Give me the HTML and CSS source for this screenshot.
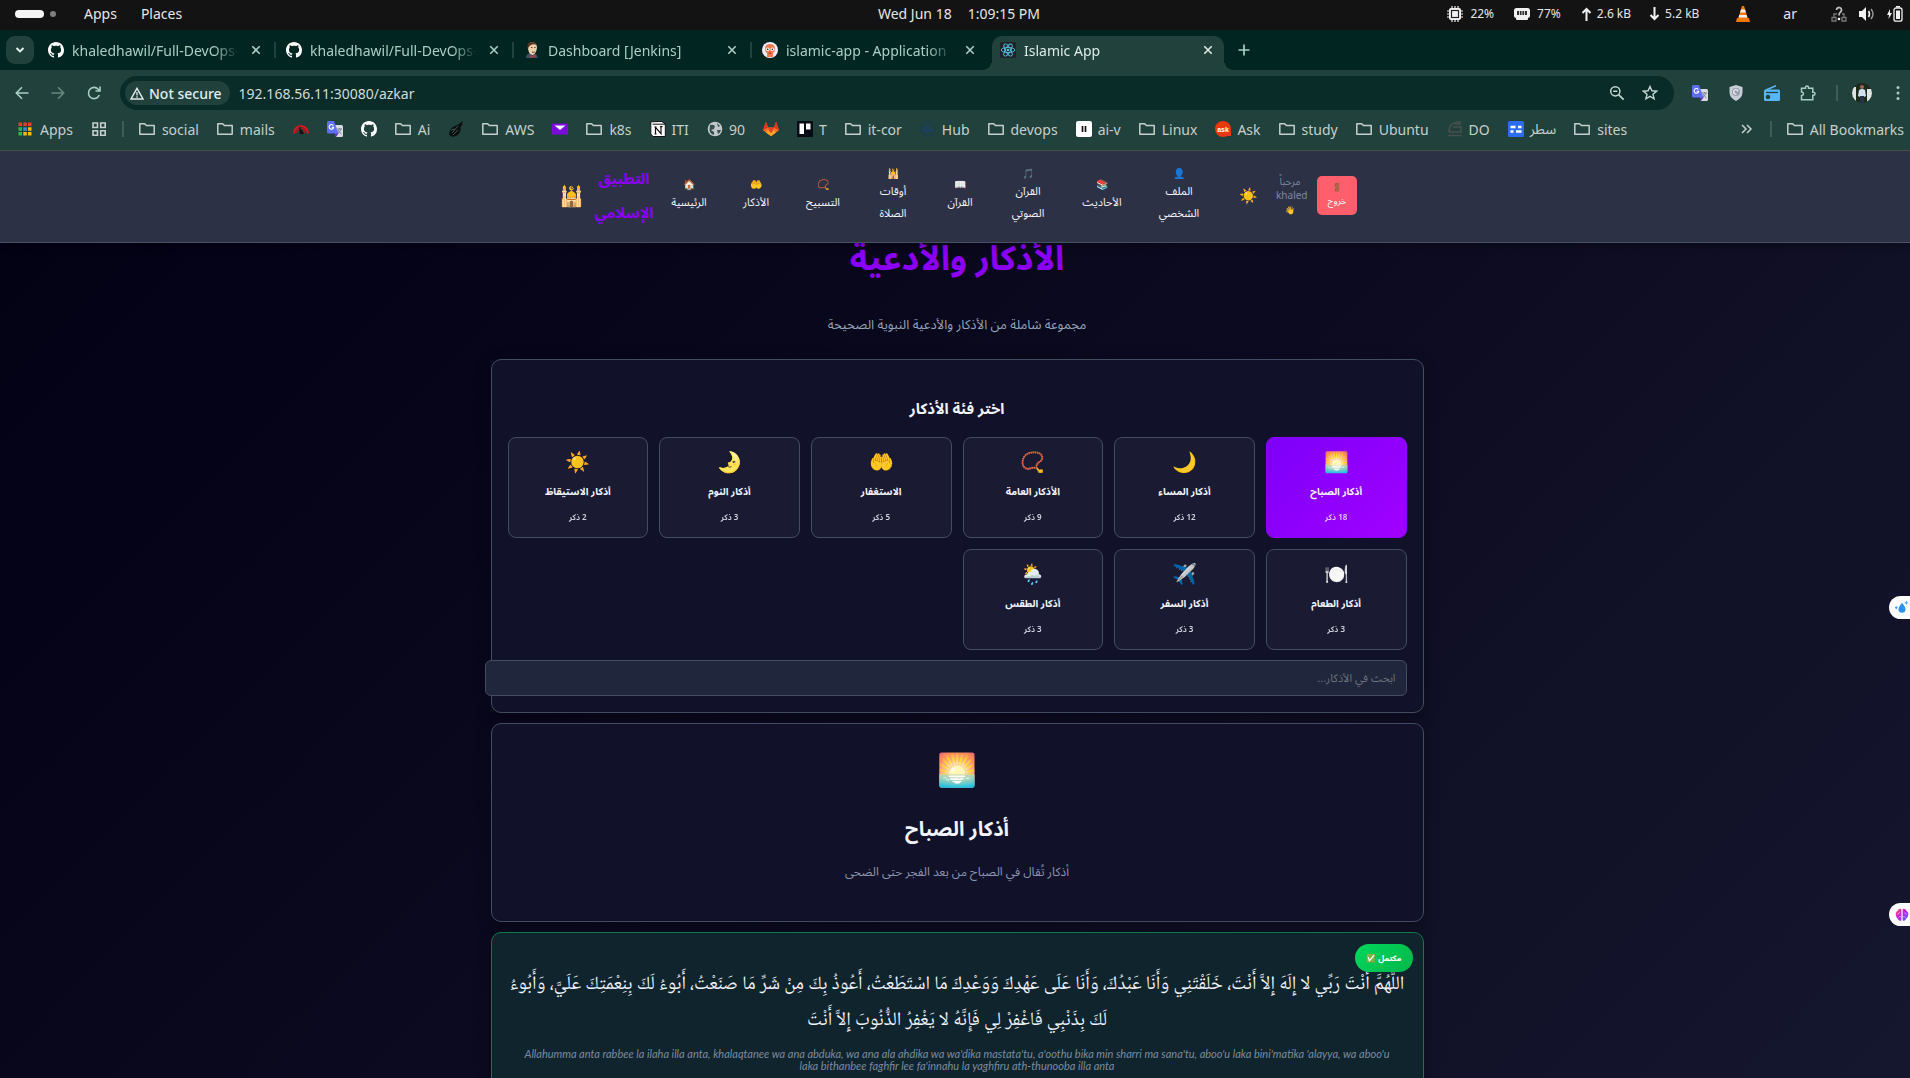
FILE: index.html
```html
<!DOCTYPE html>
<html lang="ar">
<head>
<meta charset="utf-8">
<meta name="viewport" content="width=device-width, initial-scale=1">
<title>Islamic App</title>
<link rel="stylesheet" href="styles.css">
</head>
<body>
<svg class="sprite" aria-hidden="true">
  <symbol id="github" viewBox="0 0 16 16"><path fill="currentColor" d="M8 0C3.58 0 0 3.58 0 8c0 3.54 2.29 6.53 5.47 7.59.4.07.55-.17.55-.38 0-.19-.01-.82-.01-1.49-2.01.37-2.53-.49-2.69-.94-.09-.23-.48-.94-.82-1.13-.28-.15-.68-.52-.01-.53.63-.01 1.08.58 1.23.82.72 1.21 1.87.87 2.33.66.07-.52.28-.87.51-1.07-1.78-.2-3.64-.89-3.64-3.95 0-.87.31-1.59.82-2.15-.08-.2-.36-1.02.08-2.12 0 0 .67-.21 2.2.82.64-.18 1.32-.27 2-.27s1.36.09 2 .27c1.53-1.04 2.2-.82 2.2-.82.44 1.1.16 1.92.08 2.12.51.56.82 1.27.82 2.15 0 3.07-1.87 3.75-3.65 3.95.29.25.54.73.54 1.48 0 1.07-.01 1.93-.01 2.2 0 .21.15.46.55.38A8.01 8.01 0 0 0 16 8c0-4.42-3.58-8-8-8z"/></symbol>
  <symbol id="folder" viewBox="0 0 16 16"><path d="M.8 3v10.2h14.4V4.6H7.4L5.6 2.7H.8z" fill="none" stroke="currentColor" stroke-width="1.5" stroke-linejoin="round"/></symbol>
  <symbol id="close" viewBox="0 0 10 10"><path d="M1.3 1.3l7.4 7.4M8.7 1.3L1.3 8.7" stroke="currentColor" stroke-width="1.6" fill="none"/></symbol>
  <symbol id="translate" viewBox="0 0 16 16"><path d="M6 4h8.500q1.500 0 1.500 1.500V14.500q0 1.500-1.500 1.500H9z" fill="#d8dce0"/><path d="M10 8h5M12.500 7v1M14 8q-1 3-4 5M11 9q1 2 3.500 4" stroke="#77808c" fill="none"/><path d="M1.500 0h5.500l4.500 12.500H1.500q-1.500 0-1.500-1.500V1.500q0-1.500 1.500-1.500z" fill="#5f6ff5"/><path d="M7.500 12.500h4L9 16z" fill="#5a2bc0"/><path d="M6.300 4.500A2.300 2.300 0 1 0 6.700 6.300H4.700" fill="none" stroke="#fff" stroke-width="1.100"/></symbol>
</svg>

<header class="panel">
  <div class="panel-left">
    <span class="workspaces"><i class="pill"></i><i class="dot"></i></span>
    <span>Apps</span><span>Places</span>
  </div>
  <div class="clock"><span>Wed Jun 18</span><span>1:09:15 PM</span></div>
  <div class="panel-right">
    <span class="stat"><svg class="i16" viewBox="0 0 16 16"><path d="M5 0v16M8 0v16M11 0v16M0 5h16M0 8h16M0 11h16" stroke="#eee" stroke-width="1.200"/><rect x="2" y="2" width="12" height="12" rx="2" fill="#f2f2f2"/><rect x="4.500" y="4.500" width="7" height="7" fill="#f2f2f2" stroke="#222" stroke-width="1.200"/></svg>22%</span>
    <span class="stat"><svg class="i16" viewBox="0 0 16 16"><rect x="0" y="2" width="16" height="10" rx="2.500" fill="#f2f2f2"/><rect x="2" y="10" width="12" height="4" rx="1" fill="#f2f2f2"/><path d="M3 5h10v4H3z" fill="#333"/><path d="M5.500 5v4M8 5v4M10.500 5v4" stroke="#ccc"/></svg>77%</span>
    <span class="stat net"><svg class="arrow" viewBox="0 0 10 14"><path d="M5 14V2M1 6l4-4 4 4" stroke="#f2f2f2" stroke-width="2" fill="none"/></svg>2.6 kB</span>
    <span class="stat net"><svg class="arrow" viewBox="0 0 10 14"><path d="M5 0v12M1 8l4 4 4-4" stroke="#f2f2f2" stroke-width="2" fill="none"/></svg>5.2 kB</span>
    <svg class="i16 vlc" viewBox="0 0 16 16"><path d="M2 12l-1 4h14l-1-4z" fill="#f57900"/><path d="M7 0h2l4 13q-5 2-10 0z" fill="#f57900"/><path d="M6 3.500h4l.9 3H5.100zM4.300 9h7.400l.7 2.500H3.600z" fill="#eee"/></svg>
    <span class="lang">ar</span>
    <span class="tray">
    <svg class="i16" viewBox="0 0 16 16"><path d="M1 11.500h4v3.500H1zM11 11.500h4v3.500h-4zM3 11V8h3M13 11V8h-2" stroke="#777" fill="none" stroke-width="1.300"/><path d="M5.500 4a2.500 2.500 0 1 1 4 2Q8 7 8 9.500" stroke="#bbb" stroke-width="1.800" fill="none"/><circle cx="8" cy="13" r="1.300" fill="#fff"/></svg>
    <svg class="i16" viewBox="0 0 16 16"><path d="M0 5h3l4-4v14l-4-4H0z" fill="#f2f2f2"/><path d="M9.500 5q2 3 0 6" stroke="#f2f2f2" stroke-width="1.600" fill="none"/><path d="M12 3q4 5 0 10" stroke="#999" stroke-width="1.400" fill="none"/></svg>
    <svg class="i16" viewBox="0 0 16 16"><path d="M3 3L0 9h2l-.5 4L5 7H3z" fill="#f2f2f2"/><rect x="7" y="2" width="8" height="13.200" rx="2" fill="none" stroke="#f2f2f2" stroke-width="1.300"/><rect x="9" y="4.500" width="4" height="8.500" fill="#f2f2f2"/><path d="M9 .7h4" stroke="#f2f2f2" stroke-width="1.400"/></svg>
    </span>
  </div>
</header>

<nav class="tabs" aria-label="Tabs">
  <button class="tab-search" aria-label="Search tabs"><svg viewBox="0 0 10 8"><path d="M1.500 2L5 5.500 8.500 2" stroke="currentColor" stroke-width="1.900" fill="none"/></svg></button>
  <div class="tab sep"><svg class="i16 white"><use href="#github"/></svg><span class="tab-title">khaledhawil/Full-DevOps-</span><button class="x" aria-label="Close tab"><svg><use href="#close"/></svg></button></div>
  <div class="tab sep"><svg class="i16 white"><use href="#github"/></svg><span class="tab-title">khaledhawil/Full-DevOps-</span><button class="x" aria-label="Close tab"><svg><use href="#close"/></svg></button></div>
  <div class="tab sep"><svg class="i16" viewBox="0 0 16 16"><path d="M2 16q0-4 4-5h4q3 1 4 5z" fill="#3b5068"/><path d="M4 5q-.5-4.500 4-5 5 .5 5 6-1 6-4.500 7Q4 12 4 5z" fill="#edcfa8"/><path d="M3.500 7Q2 1 7.500 0q4 0 5.500 3Q8 1 5.500 4z" fill="#54321f"/><path d="M7 5.500h1.300M10.300 5.500h1.300M8 10q1.500.8 2.800 0" stroke="#5b3d2c" fill="none"/><path d="M6.500 13l2.500 1 2.500-1.500v3L9 14.600l-2.500 1.400z" fill="#d33833"/></svg><span class="tab-title">Dashboard [Jenkins]</span><button class="x" aria-label="Close tab"><svg><use href="#close"/></svg></button></div>
  <div class="tab"><svg class="i16" viewBox="0 0 16 16"><circle cx="8" cy="8" r="8" fill="#eef"/><path d="M3 7q0-5 5-5t5 5q0 3-2 4v4H5v-4Q3 10 3 7z" fill="#ef7b4d"/><circle cx="5.700" cy="7.300" r="1.800" fill="#fff"/><circle cx="10.300" cy="7.300" r="1.800" fill="#fff"/><circle cx="5.700" cy="7.300" r=".8" fill="#111"/><circle cx="10.300" cy="7.300" r=".8" fill="#111"/><ellipse cx="8" cy="11.300" rx="1.600" ry=".8" fill="#b8392a"/></svg><span class="tab-title">islamic-app - Application</span><button class="x" aria-label="Close tab"><svg><use href="#close"/></svg></button></div>
  <div class="tab active"><svg class="i16" viewBox="0 0 16 16"><rect width="16" height="16" rx="1.500" fill="#202329"/><g fill="none" stroke="#53c1de" stroke-width=".9"><ellipse cx="8" cy="8" rx="6.800" ry="2.600"/><ellipse cx="8" cy="8" rx="6.800" ry="2.600" transform="rotate(60 8 8)"/><ellipse cx="8" cy="8" rx="6.800" ry="2.600" transform="rotate(120 8 8)"/></g><circle cx="8" cy="8" r="1.300" fill="#53c1de"/></svg><span class="tab-title">Islamic App</span><button class="x" aria-label="Close tab"><svg><use href="#close"/></svg></button></div>
  <button class="new-tab" aria-label="New tab"><svg viewBox="0 0 12 12"><path d="M6 .5v11M.5 6h11" stroke="currentColor" stroke-width="1.700"/></svg></button>
</nav>

<div class="toolbar">
  <div class="nav-buttons">
    <button aria-label="Back"><svg class="i16" viewBox="0 0 16 16"><path d="M14.500 8H2.500M8 2.300L2.300 8 8 13.700" stroke="currentColor" stroke-width="1.600" fill="none"/></svg></button>
    <button class="dim" aria-label="Forward"><svg class="i16" viewBox="0 0 16 16"><path d="M1.500 8h12M8 2.300L13.700 8 8 13.700" stroke="currentColor" stroke-width="1.600" fill="none"/></svg></button>
    <button aria-label="Reload"><svg class="i16" viewBox="0 0 16 16"><path d="M13.300 10A5.600 5.600 0 1 1 12.200 4.200L14 6M14 1.500V6H9.500" stroke="currentColor" stroke-width="1.600" fill="none"/></svg></button>
  </div>
  <div class="omnibox">
    <button class="chip"><svg viewBox="0 0 14 13"><path d="M7 1.300L13 12H1z" stroke="currentColor" stroke-width="1.400" fill="none"/><path d="M7 5v3.400M7 9.300v1.400" stroke="currentColor" stroke-width="1.300"/></svg>Not secure</button>
    <input class="url" type="text" aria-label="Address" value="192.168.56.11:30080/azkar">
    <button aria-label="Zoom"><svg class="i16" viewBox="0 0 16 16"><circle cx="6.300" cy="6.300" r="4.600" stroke="currentColor" stroke-width="1.500" fill="none"/><path d="M9.600 9.600l5 5M4.200 6.300h4.200" stroke="currentColor" stroke-width="1.600"/></svg></button>
    <button aria-label="Bookmark"><svg class="i16" viewBox="0 0 16 16"><path d="M8 1.500l1.900 4.300 4.700.4-3.600 3.100 1.100 4.600L8 11.400l-4.100 2.500L5 9.300 1.400 6.200l4.700-.4z" stroke="currentColor" stroke-width="1.400" fill="none"/></svg></button>
  </div>
  <div class="extensions">
    <svg class="i16"><use href="#translate"/></svg>
    <svg class="i16" viewBox="0 0 16 16"><path d="M8 0l6.500 2v5q0 6-6.500 9Q1.500 13 1.500 7V2z" fill="#c9cdd6"/><circle cx="8" cy="7" r="4" fill="#9a9fae"/><path d="M10 6.500A2.200 2.200 0 1 0 8.500 9" stroke="#f4f4f8" fill="none" stroke-width="1.200"/></svg>
    <svg class="i16" viewBox="0 0 16 16"><path d="M2 5L12 .8" stroke="#58b7f7" stroke-width="1.600"/><rect y="4.500" width="16" height="11.500" rx="1.500" fill="#58b7f7"/><path d="M2 7.500h12" stroke="#21413c" stroke-width="1.300"/><circle cx="4" cy="12" r="2.300" fill="#21413c"/></svg>
    <svg class="i16" viewBox="0 0 16 16"><path d="M1.500 3.300h4V2.500a1.500 1.500 0 0 1 3 0v.8h4.300v4h.7a1.500 1.500 0 0 1 0 3h-.7v4.500H1.500v-4.200q2-.3 2-1.800t-2-1.800z" stroke="currentColor" stroke-width="1.500" fill="none"/></svg>
    <i class="divider"></i>
    <svg class="avatar" viewBox="0 0 20 20"><defs><clipPath id="round"><circle cx="10" cy="10" r="10"/></clipPath></defs><g clip-path="url(#round)"><path fill="#1e2b1c" d="M0 0h20v20H0z"/><path d="M0 4h4v16H0zM15 6h5v14h-5z" fill="#dfe5e2"/><path d="M7 7q3-2 6 0l1 6-2 1H8l-2-1z" fill="#cfe0f2"/><circle cx="10" cy="4" r="2" fill="#9a6a50"/><path d="M8 13h4v7H8z" fill="#26324a"/></g></svg>
    <svg class="dots" viewBox="0 0 4 16"><circle cx="2" cy="2.500" r="1.500"/><circle cx="2" cy="8" r="1.500"/><circle cx="2" cy="13.500" r="1.500"/></svg>
  </div>
</div>

<nav class="bookmarks" aria-label="Bookmarks">
  <a href="#"><svg class="i16" viewBox="0 0 16 16"><path d="M1.500 1.500h3.500v3.500H1.500zM6.300 1.500h3.500v3.500H6.300zM11 1.500h3.500v3.500H11z" fill="#f0392f"/><path d="M1.500 6.300h3.500v3.500H1.500zM1.500 11h3.500v3.500H1.500z" fill="#2fb457"/><path d="M6.300 6.300h3.500v3.500H6.300z" fill="#4285f4"/><path d="M11 6.300h3.500v3.500H11zM6.300 11h3.500v3.500H6.300zM11 11h3.500v3.500H11z" fill="#fbbc05"/></svg>Apps</a>
  <a href="#" aria-label="Tab groups"><svg class="i16" viewBox="0 0 16 16"><path d="M2 2h4.500v4.500H2zM9.700 2h4.500v4.500H9.700zM2 9.700h4.500v4.500H2zM9.700 9.700h4.500v4.500H9.700z" stroke="currentColor" stroke-width="1.600" fill="none"/></svg></a>
  <i class="divider"></i>
  <a href="#"><svg class="i16"><use href="#folder"/></svg>social</a>
  <a href="#"><svg class="i16"><use href="#folder"/></svg>mails</a>
  <a href="#" aria-label="Speed test"><svg class="i16" viewBox="0 0 16 16"><path d="M1 12.500A7 7.500 0 0 1 15 12.500" stroke="#e0161c" stroke-width="2" fill="none"/><path d="M3.500 12a4.500 4.500 0 0 1 6-4M12 12q0-3-2-5" stroke="#b5171c" stroke-width="1.500" fill="none"/><path d="M7 13L6 5l5 8z" fill="#111"/></svg></a>
  <a href="#" aria-label="Translate"><svg class="i16"><use href="#translate"/></svg></a>
  <a href="#" aria-label="GitHub"><svg class="i16 white"><use href="#github"/></svg></a>
  <a href="#"><svg class="i16"><use href="#folder"/></svg>Ai</a>
  <a href="#" aria-label="Notes"><svg class="i16" viewBox="0 0 16 16"><path d="M14.500 0q.5 4-2 6 1 5-3 8-4 3-7 1Q0 13 2 10q1-4 5-5 4-1 7.500-5z" fill="#0b100e"/><path d="M4 12l6-7M5 14l5-5M3 9l4-1" stroke="#4c6862" stroke-width=".8"/></svg></a>
  <a href="#"><svg class="i16"><use href="#folder"/></svg>AWS</a>
  <a href="#" aria-label="Mail"><svg class="i16" viewBox="0 0 16 16"><path d="M0 2.500h16v11H0z" fill="#7b0bd8"/><path d="M2.500 4.500h11L8 9z" fill="#fff"/></svg></a>
  <a href="#"><svg class="i16"><use href="#folder"/></svg>k8s</a>
  <a href="#" class="site"><svg class="i16" viewBox="0 0 16 16"><path d="M.8.800l11-.3 3.500 2.500v12.500H3L.8 13z" fill="#fff" stroke="#111" stroke-width="1"/><path d="M2.500 3.200h12.500" stroke="#111"/><path d="M5.500 13V6.300l5.500 6.400V5.700M4.500 6h2M10 5.700h2.500M4.500 13h2" stroke="#111" stroke-width="1.200" fill="none"/></svg>ITI</a>
  <a href="#" class="site"><svg class="i16" viewBox="0 0 16 16"><circle cx="8" cy="8" r="7.300" fill="#c3c7cb"/><path d="M3 4q3-1 5 1l-1 3-3 1 3 2v3q-4-1-4.500-5zM10 2l3 3-2 1zM10 9h4q-1 3-3 4z" fill="#36504b"/></svg>90</a>
  <a href="#" aria-label="GitLab"><svg class="i16" viewBox="0 0 16 16"><path d="M8 15.300L0 9.200 2.900.8l2.300 5.600h5.600L13.100.8 16 9.200z" fill="#fc6d26"/><path d="M8 15.300L5.200 6.400h5.600z" fill="#e24329"/><path d="M0 9.200L2.900.8l2.300 5.600zM16 9.200L13.100.8l-2.300 5.600z" fill="#e2341f"/><path d="M8 15.300L3 11.500 5 9l3 3 3-3 2 2.500z" fill="#fca326"/></svg></a>
  <a href="#" class="site"><svg class="i16" viewBox="0 0 16 16"><path fill="#070b14" d="M0 0h16v16H0z"/><path d="M2.500 2.500h4.500v10.500H2.500zM9 2.500h4.500v6H9z" fill="#fff"/></svg>T</a>
  <a href="#"><svg class="i16"><use href="#folder"/></svg>it-cor</a>
  <a href="#" class="site"><svg class="i16" viewBox="0 0 16 16"><circle cx="8" cy="8" r="7.300" fill="none" stroke="#1b3a55" stroke-width="1"/><path d="M3 8h8q1-2 2-1-1 5-6 5-4 0-4-4zM4 5.500h4v2H4zM7 3.500h2v4H7z" fill="#1d3f62"/></svg>Hub</a>
  <a href="#"><svg class="i16"><use href="#folder"/></svg>devops</a>
  <a href="#" class="site"><svg class="i16" viewBox="0 0 16 16"><rect width="16" height="16" rx="2" fill="#fff"/><path d="M6.500 5v6M9.500 5v6" stroke="#111" stroke-width="1.700"/></svg>ai-v</a>
  <a href="#"><svg class="i16"><use href="#folder"/></svg>Linux</a>
  <a href="#" class="site"><svg class="i16" viewBox="0 0 16 16"><circle cx="8" cy="8" r="8" fill="#e8380d"/><path d="M9 15h7v-6z" fill="#e8380d"/><text x="8" y="10.500" text-anchor="middle" class="ask">ask</text></svg>Ask</a>
  <a href="#"><svg class="i16"><use href="#folder"/></svg>study</a>
  <a href="#"><svg class="i16"><use href="#folder"/></svg>Ubuntu</a>
  <a href="#" class="site"><svg class="i16" viewBox="0 0 16 16"><path d="M2 11q0-10 11-10v2H8M6 6h8v5H2M1 14.500h14" fill="none" stroke="#45504d" stroke-width="1.600"/></svg>DO</a>
  <a href="#" class="site"><svg class="i16" viewBox="0 0 16 16"><rect width="16" height="16" rx="1.500" fill="#2f6df0"/><path d="M2.500 6h5M10 6h3.500M2.500 10.500h3M8 10.500h5.500" stroke="#fff" stroke-width="2.600"/></svg>سطر</a>
  <a href="#"><svg class="i16"><use href="#folder"/></svg>sites</a>
  <div class="bookmarks-end">
    <a href="#" aria-label="More bookmarks"><svg class="i16" viewBox="0 0 16 16"><path d="M3 4l4 4-4 4M8 4l4 4-4 4" stroke="currentColor" stroke-width="1.500" fill="none"/></svg></a>
    <i class="divider"></i>
    <a href="#"><svg class="i16"><use href="#folder"/></svg>All Bookmarks</a>
  </div>
</nav>

<div class="page">
  <nav class="site-nav">
    <div class="brand"><span class="brand-icon">🕌</span><span class="brand-name">التطبيق الإسلامي</span></div>
    <div class="links">
      <a href="#"><span>🏠</span>الرئيسية</a>
      <a href="#"><span>🤲</span>الأذكار</a>
      <a href="#"><span>📿</span>التسبيح</a>
      <a href="#"><span>🕌</span>أوقات<br>الصلاة</a>
      <a href="#"><span>📖</span>القرآن</a>
      <a href="#"><span>🎵</span>القرآن<br>الصوتي</a>
      <a href="#"><span>📚</span>الأحاديث</a>
      <a href="#"><span>👤</span>الملف<br>الشخصي</a>
    </div>
    <button class="theme" aria-label="Theme">☀️</button>
    <div class="greeting">مرحباً<br>khaled<br><span>👋</span></div>
    <button class="logout"><span>🚪</span>خروج</button>
  </nav>

  <main class="content" dir="rtl">
    <header class="intro">
      <h1>الأذكار والأدعية</h1>
      <p>مجموعة شاملة من الأذكار والأدعية النبوية الصحيحة</p>
    </header>

    <section class="card chooser">
      <h3>اختر فئة الأذكار</h3>
      <div class="categories">
        <button class="category selected"><span class="emoji">🌅</span><b>أذكار الصباح</b><small>18 ذكر</small></button>
        <button class="category"><span class="emoji">🌙</span><b>أذكار المساء</b><small>12 ذكر</small></button>
        <button class="category"><span class="emoji">📿</span><b>الأذكار العامة</b><small>9 ذكر</small></button>
        <button class="category"><span class="emoji">🤲</span><b>الاستغفار</b><small>5 ذكر</small></button>
        <button class="category"><span class="emoji">🌛</span><b>أذكار النوم</b><small>3 ذكر</small></button>
        <button class="category"><span class="emoji">☀️</span><b>أذكار الاستيقاظ</b><small>2 ذكر</small></button>
        <button class="category"><span class="emoji">🍽️</span><b>أذكار الطعام</b><small>3 ذكر</small></button>
        <button class="category"><span class="emoji">✈️</span><b>أذكار السفر</b><small>3 ذكر</small></button>
        <button class="category"><span class="emoji">🌦️</span><b>أذكار الطقس</b><small>3 ذكر</small></button>
      </div>
      <input class="search" type="text" placeholder="ابحث في الأذكار..." aria-label="ابحث في الأذكار">
    </section>

    <section class="card summary">
      <span class="big-emoji">🌅</span>
      <h2>أذكار الصباح</h2>
      <p>أذكار تُقال في الصباح من بعد الفجر حتى الضحى</p>
    </section>

    <article class="card zikr">
      <span class="badge">مكتمل ✅</span>
      <p class="arabic">اللَّهُمَّ أَنْتَ رَبِّي لا إِلَهَ إِلاَّ أَنْتَ، خَلَقْتَنِي وَأَنَا عَبْدُكَ، وَأَنَا عَلَى عَهْدِكَ وَوَعْدِكَ مَا اسْتَطَعْتُ، أَعُوذُ بِكَ مِنْ شَرِّ مَا صَنَعْتُ، أَبُوءُ لَكَ بِنِعْمَتِكَ عَلَيَّ، وَأَبُوءُ لَكَ بِذَنْبِي فَاغْفِرْ لِي فَإِنَّهُ لا يَغْفِرُ الذُّنُوبَ إِلاَّ أَنْتَ</p>
      <p class="latin" dir="ltr">Allahumma anta rabbee la ilaha illa anta, khalaqtanee wa ana abduka, wa ana ala ahdika wa wa'dika mastata'tu, a'oothu bika min sharri ma sana'tu, aboo'u laka bini'matika 'alayya, wa aboo'u laka bithanbee faghfir lee fa'innahu la yaghfiru ath-thunooba illa anta</p>
    </article>
  </main>

  <button class="floater water" aria-label="Assistant"><svg viewBox="0 0 16 16"><path d="M8 2q4 5 4 7.500a4 4 0 0 1-8 0Q4 7 8 2z" fill="#2b93f3"/><path d="M13 0v4M11 2h4M1.500 6v3M0 7.500h3" stroke="#45a4f5" stroke-width="1.300"/></svg></button>
  <button class="floater brain" aria-label="Brain"><svg viewBox="0 0 16 16"><defs><linearGradient id="bg" x1="0" y1="0" x2="1" y2="1"><stop stop-color="#ff5a6a"/><stop offset=".5" stop-color="#c517f0"/><stop offset="1" stop-color="#3b7cff"/></linearGradient></defs><path d="M7.300 1Q4 0 3 3 0 5 1 8q0 3 2 4 2 4 4.300 2zM8.700 1Q12 0 13 3q3 2 2 5 0 3-2 4-2 4-4.300 2z" fill="url(#bg)"/><path d="M3 7q2 0 2-2M13 7q-2 0-2-2M4 11q1-2 3-1M12 11q-1-2-3-1" stroke="#fff" stroke-width=".6" fill="none"/></svg></button>
</div>
</body>
</html>
```
FILE: styles.css
```css
* { box-sizing: border-box; }
html, body { height: 100%; }
body {
  margin: 0;
  display: flex;
  flex-direction: column;
  overflow: hidden;
  font-family: "Noto Sans", "Noto Sans Arabic", "DejaVu Sans", sans-serif;
  font-size: 14px;
  color: #c5cfcc;
  background: #21413c;
}
button { font: inherit; color: inherit; border: 0; background: none; padding: 0; }
a { color: inherit; text-decoration: none; }
svg { display: block; flex: none; }
.sprite { position: absolute; width: 0; height: 0; }
.i16 { width: 16px; height: 16px; }
.white { color: #fff; }
.divider { width: 2px; height: 16px; background: #3d5e57; flex: none; }

/* desktop panel */
.panel {
  display: grid;
  grid-template-columns: 1fr auto 1fr;
  align-items: center;
  height: 30px;
  flex: none;
  padding: 0 7px 3px 15px;
  background: #131313;
  color: #e6e6e6;
}
.panel-left { display: flex; align-items: center; gap: 24px; }
.workspaces { display: flex; align-items: center; gap: 6px; margin-right: 4px; }
.pill { width: 29px; height: 8px; border-radius: 4px; background: #f4f4f4; }
.dot { width: 6px; height: 6px; border-radius: 3px; background: #808080; }
.clock { display: flex; gap: 16px; }
.panel-right { display: flex; align-items: center; justify-content: flex-end; font-size: 12px; }
.stat { display: flex; align-items: center; gap: 7px; margin-right: 20px; }
.stat.net { gap: 5px; margin-right: 18px; }
.arrow { width: 11px; height: 14px; }
.vlc { margin-left: 18px; }
.lang { margin: 0 34px 0 32px; font-size: 14px; }
.tray { display: flex; gap: 12px; }

/* browser tabs */
.tabs {
  display: flex;
  align-items: flex-start;
  height: 40px;
  flex: none;
  padding: 6px 6px 0;
  background: #012622;
  color: #a8cfc4;
}
.tab-search { width: 28px; height: 28px; margin-right: 4px; border-radius: 9px; background: #21413c; display: grid; place-items: center; }
.tab-search svg { width: 10px; height: 8px; color: #e6f0ec; }
.tab { position: relative; display: flex; align-items: center; gap: 8px; width: 238px; height: 28px; padding: 0 15px 0 10px; }
.tab.sep::after { content: ""; position: absolute; right: 0; width: 2px; height: 16px; background: #21413c; }
.tab-title { flex: 1; overflow: hidden; white-space: nowrap; -webkit-mask-image: linear-gradient(90deg, #000 85%, transparent); mask-image: linear-gradient(90deg, #000 85%, transparent); }
.x { margin-left: 4px; }
.x svg { width: 10px; height: 10px; }
.tab.active { width: 232px; height: 34px; padding: 0 11px 6px 8px; border-radius: 10px 10px 0 0; background: #21413c; color: #dcebe6; margin-left: 2px; }
.tab.active::before, .tab.active::after { content: ""; position: absolute; bottom: 0; width: 10px; height: 10px; }
.tab.active::before { left: -10px; background: radial-gradient(circle at 0 0, transparent 10px, #21413c 10px); }
.tab.active::after { right: -10px; background: radial-gradient(circle at 100% 0, transparent 10px, #21413c 10px); }
.new-tab { width: 28px; height: 28px; margin-left: 6px; display: grid; place-items: center; }
.new-tab svg { width: 12px; height: 12px; }

/* toolbar */
.toolbar { display: flex; align-items: center; height: 46px; flex: none; padding: 0 10px 0 14px; color: #a8cfc4; }
.nav-buttons { display: flex; gap: 20px; margin-right: 18px; }
.dim { opacity: .5; }
.omnibox { flex: 1; display: flex; align-items: center; gap: 17px; height: 34px; padding: 0 16px 0 5px; border-radius: 17px; background: #092c28; color: #c5d6d1; }
.chip { display: flex; align-items: center; gap: 5px; height: 24px; padding: 0 8px 0 5px; border-radius: 12px; background: #21413c; color: #e2ece9; font-weight: 500; }
.chip svg { width: 14px; height: 13px; }
.url { flex: 1; min-width: 0; margin-left: -8px; padding: 0; border: 0; outline: 0; background: none; color: #cfdcd8; font: inherit; }
.extensions { display: flex; align-items: center; gap: 20px; margin-left: 18px; }
.avatar { width: 20px; height: 20px; margin: 0 4px 0 -6px; }
.dots { width: 4px; height: 16px; fill: #a8cfc4; }

/* bookmarks */
.bookmarks { display: flex; align-items: center; gap: 18px; height: 34px; flex: none; padding: 0 6px 8px 17px; white-space: nowrap; }
.bookmarks a { display: flex; align-items: center; gap: 7px; }
.bookmarks .divider { margin: 0 -3px; }
.bookmarks a.site { gap: 6px; }
.bookmarks-end { display: flex; align-items: center; gap: 18px; margin-left: auto; }
.ask { font: bold 7px "Liberation Sans", sans-serif; fill: #fff; }

/* site */
.page {
  position: relative;
  flex: 1;
  min-height: 0;
  overflow: hidden;
  border-top: 1px solid #435046;
  background: linear-gradient(135deg, #020013 0%, #0c0a20 50%, #15172e 100%);
  color: #f1f3fa;
}
.site-nav {
  position: relative;
  z-index: 2;
  display: flex;
  justify-content: center;
  align-items: center;
  height: 92px;
  background: #2d3146;
  border-bottom: 1px solid #465067;
  box-shadow: 0 2px 8px rgba(0, 0, 0, .3);
  padding: 0 0 3px 6px;
}
.brand { display: flex; align-items: center; gap: 10px; width: 97px; }
.brand-icon { font-size: 20px; }
.brand-name { width: 60px; text-align: center; color: #8b00f5; font-weight: 700; font-size: 15px; line-height: 34px; }
.links { display: grid; grid-template-columns: 66px 68px 66px 74px 60px 76px 72px 82px; align-items: center; text-align: center; font-size: 11px; line-height: 22px; }
.links span { display: block; font-size: 10px; line-height: 14px; }
.theme { width: 56px; font-size: 15px; }
.greeting { width: 28px; text-align: center; color: #7f88a0; font-size: 10px; line-height: 14px; }
.greeting span { font-size: 8px; }
.logout { width: 40px; height: 39px; margin-left: 13px; border-radius: 5px; background: #ff5e6c; color: #fff; font-size: 9px; line-height: 16px; }
.logout span { display: block; font-size: 8px; line-height: 12px; }

.content { width: 933px; max-width: 94%; margin: 0 auto; position: relative; left: 2px; text-align: center; }
.intro { margin-top: -20px; }
.intro h1 { margin: 0; color: #8b00f5; font-size: 34px; line-height: 68px; }
.intro p { margin: 22px 0 24px; line-height: 22px; font-size: 13px; color: #94a3b8; }
.card { border: 1px solid #434c62; border-radius: 10px; background: #11122a; box-shadow: 0 4px 16px rgba(0, 0, 0, .3); margin-bottom: 10px; }
.chooser { padding: 34px 16px 16px; }
.chooser h3 { margin: 0 0 15px; font-size: 15px; line-height: 28px; }
.categories { display: grid; grid-template-columns: repeat(6, 1fr); gap: 11px; }
.category { display: flex; flex-direction: column; align-items: center; height: 101px; padding-top: 9px; border: 1px solid #434c62; border-radius: 8px; background: #1a1b33; }
.category.selected { border-color: #8b00ff; background: linear-gradient(135deg, #7c00f8, #a100ff); }
.emoji { font-size: 20px; line-height: 30px; }
.category b { font-size: 10px; line-height: 28px; }
.category small { font-size: 8px; font-weight: 600; line-height: 24px; opacity: .85; }
.search { display: block; width: calc(100% + 23px); height: 36px; margin-top: 10px; padding: 0 10px 2px; border: 1px solid #434c62; border-radius: 6px; background: #20263b; font: inherit; font-size: 11px; }
.search::placeholder { color: #6d727c; }
.summary { height: 199px; padding-top: 19px; }
.big-emoji { display: block; font-size: 32px; line-height: 52px; }
.summary h2 { margin: 10px 0 9px; font-size: 20px; line-height: 48px; }
.summary p { margin: 0; font-size: 12px; line-height: 20px; color: #8d96b0; }
.zikr { position: relative; padding: 34px 16px; border-color: #0d7a48; background: #0f242c; }
.badge { position: absolute; top: 11px; right: 10px; height: 28px; padding: 0 11px; border-radius: 14px; background: linear-gradient(135deg, #00d65c, #00b84a); color: #fff; font-weight: 700; font-size: 8px; line-height: 28px; }
.arabic { margin: 0; font-family: "Noto Naskh Arabic", "Amiri", "Liberation Serif", serif; font-size: 19px; line-height: 36px; }
.latin { margin: 9px 0 0; padding: 0 8px; font-family: Lato, "Noto Sans", sans-serif; font-size: 11px; line-height: 12px; font-style: italic; color: #7d8ba1; }

.floater { position: absolute; right: 0; width: 21px; height: 23px; padding-left: 6px; border-radius: 12px 0 0 12px; background: #fff; }
.floater svg { width: 14px; height: 14px; }
.water { top: 445px; }
.brain { top: 752px; }
```
